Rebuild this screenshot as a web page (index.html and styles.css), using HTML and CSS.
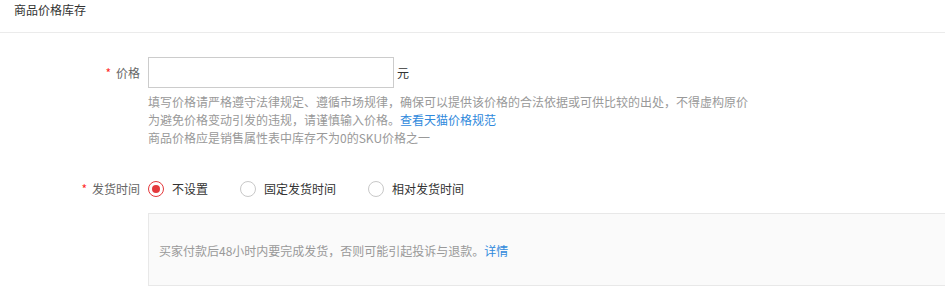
FILE: index.html
```html
<!DOCTYPE html>
<html lang="zh-CN">
<head>
<meta charset="utf-8">
<link rel="stylesheet" href="styles.css">
</head>
<body>
<div class="page">
  <div class="header">商品价格库存</div>
  <div class="field price-field">
    <div class="label"><span class="req">*</span>价格</div>
    <div class="control">
      <div class="input-row">
        <input class="price-input" type="text">
        <span class="unit">元</span>
      </div>
      <div class="help">
        <div>填写价格请严格遵守法律规定、遵循市场规律，确保可以提供该价格的合法依据或可供比较的出处，不得虚构原价</div>
        <div>为避免价格变动引发的违规，请谨慎输入价格。<a class="link" href="#">查看天猫价格规范</a></div>
        <div>商品价格应是销售属性表中库存不为0的SKU价格之一</div>
      </div>
    </div>
  </div>
  <div class="field ship-field">
    <div class="label"><span class="req">*</span>发货时间</div>
    <div class="control">
      <div class="radios">
        <label class="radio checked"><span class="dot"></span>不设置</label>
        <label class="radio"><span class="dot"></span>固定发货时间</label>
        <label class="radio"><span class="dot"></span>相对发货时间</label>
      </div>
      <div class="notice">买家付款后48小时内要完成发货，否则可能引起投诉与退款。<a class="link" href="#">详情</a></div>
    </div>
  </div>
</div>
</body>
</html>
```
FILE: styles.css
```css
html, body {
  margin: 0;
  padding: 0;
  background: #fff;
  overflow: hidden;
}
body {
  font-family: "Noto Sans CJK SC", "Noto Sans", sans-serif;
  font-size: 12px;
  color: #333;
}
.page {
  width: 945px;
}
.header {
  height: 32px;
  line-height: 20px;
  padding-left: 14px;
  border-bottom: 1px solid #ebebeb;
  color: #333;
  box-sizing: border-box;
  height: 33px;
}
.field {
  display: flex;
}
.label {
  width: 140px;
  margin-right: 8px;
  text-align: right;
  color: #666;
  flex-shrink: 0;
}
.req {
  color: #ff2a2a;
  margin-right: 5px;
  font-size: 12px;
}
.price-field {
  margin-top: 24px;
}
.price-field .label {
  line-height: 31px;
}
.input-row {
  display: flex;
  align-items: center;
}
.price-input {
  width: 246px;
  height: 31px;
  box-sizing: border-box;
  border: 1px solid #cccccc;
  margin: 0;
  padding: 0 6px;
  outline: none;
}
.unit {
  margin-left: 3px;
  color: #333;
  font-size: 12px;
}
.help {
  margin-top: 5px;
  line-height: 18px;
  color: #999;
}
.link {
  color: #3089dc;
  text-decoration: none;
}
.ship-field {
  margin-top: 32px;
}
.ship-field .label {
  line-height: 20px;
}
.radios {
  display: flex;
  height: 20px;
  align-items: center;
  gap: 32px;
}
.radio {
  display: flex;
  align-items: center;
  color: #333;
  line-height: 20px;
}
.dot {
  width: 16px;
  height: 16px;
  box-sizing: border-box;
  border: 1px solid #c8c8c8;
  border-radius: 50%;
  margin-right: 8px;
  display: flex;
  align-items: center;
  justify-content: center;
  background: #fff;
}
.radio.checked .dot {
  border: 1.5px solid #e4393c;
}
.radio.checked .dot::after {
  content: "";
  width: 8px;
  height: 8px;
  border-radius: 50%;
  background: #e4393c;
}
.notice {
  margin-top: 14px;
  width: 830px;
  height: 73px;
  box-sizing: border-box;
  background: #fafafa;
  border: 1px solid #e8e8e8;
  padding-left: 10px;
  padding-top: 1px;
  display: flex;
  align-items: center;
  color: #999;
}
```
